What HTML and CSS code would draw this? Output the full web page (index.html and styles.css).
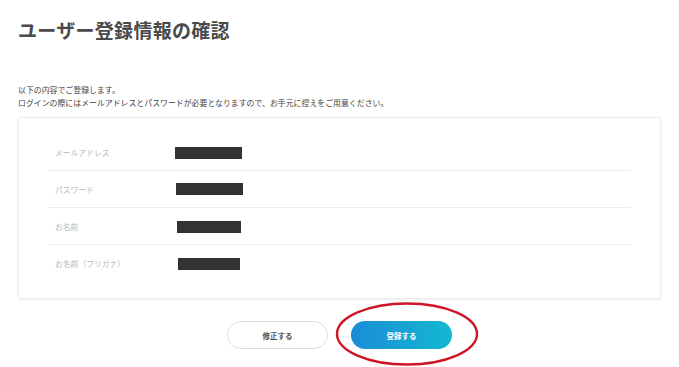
FILE: index.html
```html
<!DOCTYPE html>
<html lang="ja">
<head>
<meta charset="utf-8">
<title>ユーザー登録情報の確認</title>
<link rel="stylesheet" href="styles.css">
</head>
<body>
<main class="page">
  <h1 class="title">ユーザー登録情報の確認</h1>
  <div class="intro">
    <p>以下の内容でご登録します。</p>
    <p>ログインの際にはメールアドレスとパスワードが必要となりますので、お手元に控えをご用意ください。</p>
  </div>
  <section class="card">
    <div class="row">
      <span class="label">メールアドレス</span>
      <span class="value"><span class="redact r1"></span></span>
    </div>
    <div class="row">
      <span class="label">パスワード</span>
      <span class="value"><span class="redact r2"></span></span>
    </div>
    <div class="row">
      <span class="label">お名前</span>
      <span class="value"><span class="redact r3"></span></span>
    </div>
    <div class="row last">
      <span class="label">お名前（フリガナ）</span>
      <span class="value"><span class="redact r4"></span></span>
    </div>
  </section>
  <div class="actions">
    <button class="btn btn-back" type="button">修正する</button>
    <button class="btn btn-submit" type="button">登録する</button>
  </div>
  <svg class="annotation" width="146" height="66" viewBox="0 0 146 66" aria-hidden="true">
    <ellipse cx="73" cy="33" rx="70" ry="30.5" fill="none" stroke="#cf1424" stroke-width="2.4"/>
  </svg>
</main>
</body>
</html>
```
FILE: styles.css
```css
* { box-sizing: border-box; }
html, body {
  margin: 0;
  padding: 0;
  background: #fff;
}
body {
  font-family: "Noto Sans CJK JP", "Noto Sans", sans-serif;
  color: #444;
}
.page {
  position: relative;
  width: 679px;
  height: 367px;
  padding: 17px 18px 0 18px;
  overflow: hidden;
}
.title {
  margin: 0;
  font-size: 19px;
  line-height: 26px;
  font-weight: 700;
  color: #4a4a4a;
  letter-spacing: 0.3px;
}
.intro {
  margin-top: 40px;
}
.intro p {
  margin: 0;
  font-size: 7.9px;
  line-height: 13px;
  color: #444;
}
.card {
  margin-top: 8px;
  border: 1px solid #ececec;
  border-radius: 3px;
  box-shadow: 0 1px 3px rgba(0, 0, 0, 0.07);
  padding: 16px 29px 16px 29px;
}
.row {
  display: flex;
  align-items: center;
  height: 37px;
  border-bottom: 1px solid #ececec;
  padding-left: 7px;
}
.row.last { border-bottom: none; }
.label {
  width: 120px;
  font-size: 7.8px;
  color: #b8b8b8;
}
.value {
  display: flex;
  align-items: center;
}
.redact {
  display: block;
  height: 12px;
  background: #333;
}
.r1 { width: 67px; margin-top: 2px; }
.r2 { width: 67px; margin-left: 1px; }
.r3 { width: 64px; margin-left: 2px; margin-top: 2px; }
.r4 { width: 62px; margin-left: 3px; }
.actions {
  display: flex;
  justify-content: center;
  gap: 23px;
  margin-top: 22px;
}
.btn {
  width: 101px;
  height: 28px;
  border-radius: 14px;
  font-family: "Noto Sans CJK JP", "Noto Sans", sans-serif;
  font-size: 7.5px;
  font-weight: 700;
  cursor: pointer;
}
.btn-back {
  background: #fff;
  border: 1px solid #dedede;
  color: #555;
}
.btn-submit {
  border: none;
  color: #fff;
  background: linear-gradient(90deg, #1a8cd8 0%, #14b8cf 100%);
}
.annotation {
  position: absolute;
  left: 334px;
  top: 301px;
}
```
